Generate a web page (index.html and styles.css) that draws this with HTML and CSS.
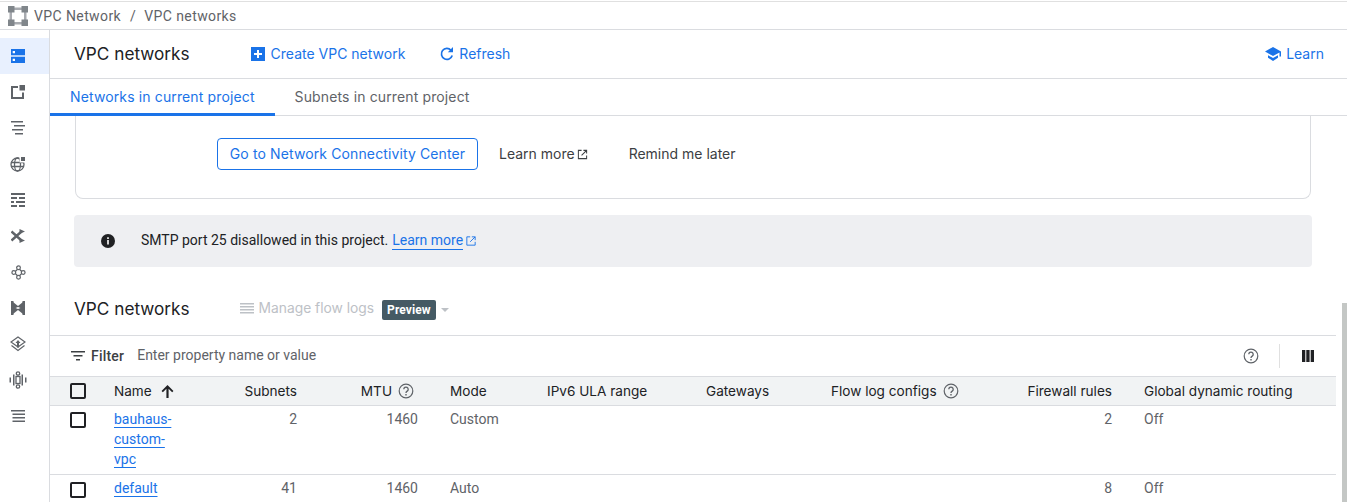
FILE: index.html
```html
<!DOCTYPE html>
<html lang="en">
<head>
<meta charset="utf-8">
<title>VPC networks</title>
<link rel="stylesheet" href="styles.css">
</head>
<body>
<header class="crumbs">
  <svg class="logo" viewBox="0 0 20 20" width="20" height="20"><path fill="#a8abb0" d="M6 1.500h8v2.500H6zM6 16h8v2.500H6zM1.500 6H4v8H1.500zM16 6h2.500v8H16z"/><path fill="#80868b" d="M0 0h6.500v6.500H0zM13.500 0H20v6.500h-6.500zM0 13.500h6.500V20H0zM13.500 13.500H20V20h-6.500z"/></svg>
  <span>VPC Network</span><span class="sep">/</span><span>VPC networks</span>
</header>
<div class="shell">
  <nav class="rail">
    <a class="rail-item active"><svg viewBox="0 0 14 14" width="14" height="14"><path fill="#1a73e8" d="M0 0h14v6.300H0zM0 7.700h14V14H0z"/><path fill="#fff" d="M1.700 2h2.300v2.300H1.700zM1.700 9.700h2.300V12H1.700z"/></svg></a>
    <a class="rail-item"><svg viewBox="0 0 14 14" width="14" height="14"><path fill="#5f6368" d="M0 1h7v2H2v9h9V7.500h2V14H0zM8.500 0H14v5.500H8.500z"/></svg></a>
    <a class="rail-item"><svg viewBox="0 0 14 14" width="14" height="14"><path fill="#5f6368" d="M0 0h12v1.500H0zM3 4h11v1.500H3zM1 8h11v1.500H1zM4 12h8v1.500H4z"/></svg></a>
    <a class="rail-item"><svg viewBox="0 0 16 16" width="16" height="16"><g fill="none" stroke="#5f6368" stroke-width="1.300"><circle cx="7.500" cy="8.500" r="6.500"/><ellipse cx="7.500" cy="8.500" rx="3" ry="6.500"/><path d="M1 6.500h13M1 10.500h13"/></g><path fill="#fff" d="M9.500 0H16v6.500H9.500z"/><path fill="#5f6368" d="M11 1h4v4h-4z"/></svg></a>
    <a class="rail-item"><svg viewBox="0 0 14 14" width="14" height="14"><path fill="#5f6368" d="M0 0h14v2H0zM0 4h6v2H0zM8 4h6v2H8zM0 8h3v2H0zM5 8h9v2H5zM0 12h6v2H0zM8 12h6v2H8z"/></svg></a>
    <a class="rail-item"><svg viewBox="0 0 14 14" width="14" height="14"><g fill="none" stroke="#5f6368" stroke-width="2.400"><path d="M.5 2.500l10 9M.5 11.500l10-9"/></g><path fill="#5f6368" d="M8.500 0L14 2.500 8.500 5zM8.500 9L14 11.500 8.500 14z"/></svg></a>
    <a class="rail-item"><svg viewBox="0 0 16 16" width="15" height="15"><g fill="none" stroke="#5f6368" stroke-width="1.300"><path d="M8 3.500L12.500 8 8 12.500 3.500 8z"/><g fill="#fff"><circle cx="8" cy="3" r="2"/><circle cx="8" cy="13" r="2"/><circle cx="3" cy="8" r="2"/><circle cx="13" cy="8" r="2"/></g></g></svg></a>
    <a class="rail-item"><svg viewBox="0 0 14 14" width="14" height="14"><path fill="#5f6368" d="M0 0h2.500v14H0zM11.500 0H14v14h-2.500z"/><path fill="#5f6368" fill-rule="evenodd" d="M2 1l5 4L12 1v12L7 9l-5 4zM7 6L4.500 7 7 8l2.500-1z"/></svg></a>
    <a class="rail-item"><svg viewBox="0 0 16 16" width="16" height="16"><g fill="none" stroke="#5f6368" stroke-width="1.200"><path d="M8 1l7 5-7 5-7-5z"/><path d="M1.500 9.500L8 14.500l6.500-5"/></g><path fill="#5f6368" d="M8 4l2.500 3H9v4.500H7V7H5.500z"/></svg></a>
    <a class="rail-item"><svg viewBox="0 0 18 18" width="18" height="18"><g fill="none" stroke="#5f6368" stroke-width="1.300"><rect x="7" y="5.500" width="4" height="7"/><circle cx="9" cy="2.500" r="1.700"/><circle cx="9" cy="15.500" r="1.700"/></g><path fill="#5f6368" d="M4 3.500h1.500v11H4zM12.500 3.500H14v11h-1.500zM0.500 6.500H2v5H0.500zM16 6.500h1.500v5H16z"/></svg></a>
    <a class="rail-item"><svg viewBox="0 0 14 14" width="14" height="14"><path fill="#5f6368" d="M0 1h14v1.500H0zM1.500 4.500H14V6H1.500zM1.500 8H14v1.500H1.500zM1.500 11.500H14V13H1.500z"/></svg></a>
  </nav>
  <main class="main">
    <div class="page-head">
      <h1 class="title">VPC networks</h1>
      <a class="action action-create"><svg viewBox="0 0 14 14" width="14" height="14"><path fill="#1a73e8" d="M0 0h14v14H0z"/><path fill="#fff" d="M6 3h2v3h3v2H8v3H6V8H3V6h3z"/></svg><span class="shift">Create VPC network</span></a>
      <a class="action action-refresh"><svg viewBox="0 0 16 16" width="16" height="16"><path fill="none" stroke="#1a73e8" stroke-width="1.700" d="M13.200 9.500A5.500 5.500 0 1 1 12 4.200"/><path fill="#1a73e8" d="M14 1v5.200H8.800z"/></svg><span class="shift">Refresh</span></a>
      <a class="action action-learn"><svg viewBox="0 0 16 14" width="16" height="14"><path fill="#1a73e8" d="M8 0l8 4.500v5h-1.500V5.400L8 9 0 4.500zM3 8.200l5 2.800 5-2.800v2.600L8 14l-5-3.200z"/></svg><span class="shift">Learn</span></a>
    </div>
    <div class="tabs">
      <a class="tab tab-active">Networks in current project</a>
      <a class="tab">Subnets in current project</a>
    </div>
    <div class="content">
      <section class="promo">
        <a class="btn-outline">Go to Network Connectivity Center</a>
        <a class="promo-link link-more"><span class="shift">Learn more</span><svg class="ext" viewBox="0 0 12 12" width="11" height="11"><path fill="none" stroke="#3c4043" stroke-width="1.100" d="M5 1.500H1.500v9h9V7M7 1.500h3.500V5M10.500 1.500L5 7"/></svg></a>
        <a class="promo-link link-remind"><span class="shift">Remind me later</span></a>
      </section>
      <section class="notice">
        <svg class="notice-icon" viewBox="0 0 14 14" width="14" height="14"><circle cx="7" cy="7" r="7" fill="#202124"/><path fill="#fff" d="M6.200 6h1.600v4.500H6.200zM6.200 3.300h1.600v1.600H6.200z"/></svg>
        <span class="shift">SMTP port 25 disallowed in this project.</span>
        <a class="notice-link">Learn more</a><svg class="ext-blue" viewBox="0 0 12 12" width="10" height="10"><path fill="none" stroke="#1a73e8" stroke-width="1.100" d="M5 1H1v10h10V7M7 1h4v4M11 1L5 7"/></svg>
      </section>
      <div class="section-head">
        <h2 class="title">VPC networks</h2>
        <span class="manage"><svg viewBox="0 0 14 11" width="14" height="11"><path fill="#bdc1c6" d="M0 0h14v1.500H0zM0 3h14v1.500H0zM0 6h14v1.500H0zM0 9h14v1.500H0z"/></svg><span>Manage flow logs</span></span>
        <span class="badge">Preview</span>
        <span class="caret"></span>
      </div>
    </div>
    <div class="filter">
      <svg viewBox="0 0 14 10" width="14" height="10"><path fill="#3c4043" d="M0 0h14v1.500H0zM2.500 4h9v1.500h-9zM5 8h4v1.500H5z"/></svg>
      <span class="filter-label">Filter</span>
      <span class="filter-input">Enter property name or value</span>
      <svg class="help-large" viewBox="0 0 16 16" width="16" height="16"><use href="#help"/></svg>
      <span class="divider"></span>
      <svg viewBox="0 0 12 12" width="12" height="12"><path fill="#202124" d="M0 0h3.300v12H0zM4.300 0h3.300v12H4.300zM8.700 0H12v12H8.700z"/></svg>
    </div>
    <table class="grid">
      <colgroup>
        <col class="c-check"><col class="c-name"><col class="c-subnets"><col class="c-mtu"><col class="c-mode"><col class="c-ipv6"><col class="c-gw"><col class="c-flow"><col class="c-fw"><col class="c-global">
      </colgroup>
      <thead>
        <tr>
          <th class="check"><span class="box"></span></th>
          <th>Name<svg class="sort" viewBox="0 0 12 12" width="13" height="13"><path fill="#202124" d="M5 12V3.500L1.700 6.800.5 5.500 6 0l5.500 5.500-1.200 1.300L7 3.500V12z"/></svg></th>
          <th class="num">Subnets</th>
          <th class="num mtu-head">MTU<svg class="help" viewBox="0 0 16 16" width="16" height="16"><use href="#help"/></svg></th>
          <th>Mode</th>
          <th>IPv6 ULA range</th>
          <th>Gateways</th>
          <th>Flow log configs<svg class="help" viewBox="0 0 16 16" width="16" height="16"><use href="#help"/></svg></th>
          <th class="num">Firewall rules</th>
          <th>Global dynamic routing</th>
        </tr>
      </thead>
      <tbody>
        <tr>
          <td class="check"><span class="box"></span></td>
          <td><div class="name-cell"><a>bauhaus-custom-vpc</a></div></td>
          <td class="num">2</td>
          <td class="num">1460</td>
          <td>Custom</td>
          <td></td><td></td><td></td>
          <td class="num">2</td>
          <td>Off</td>
        </tr>
        <tr>
          <td class="check"><span class="box"></span></td>
          <td><div class="name-cell"><a>default</a></div></td>
          <td class="num">41</td>
          <td class="num">1460</td>
          <td>Auto</td>
          <td></td><td></td><td></td>
          <td class="num">8</td>
          <td>Off</td>
        </tr>
      </tbody>
    </table>
  </main>
</div>
<div class="scroll-thumb"></div>
<svg class="defs" width="0" height="0"><defs><g id="help"><circle cx="8" cy="8" r="6.800" fill="none" stroke="#5f6368" stroke-width="1.200"/><path fill="none" stroke="#5f6368" stroke-width="1.300" d="M5.800 6.300a2.200 2.200 0 1 1 3.400 1.800c-.8.500-1.200.9-1.200 1.900"/><path fill="#5f6368" d="M7.300 11h1.400v1.400H7.300z"/></g></defs></svg>
</body>
</html>
```
FILE: styles.css
```css
* { box-sizing: border-box; }
html, body { margin: 0; height: 502px; overflow: hidden; background: #fff; }
body { font-family: Roboto, "Liberation Sans", sans-serif; font-size: 14px; color: #3c4043; position: relative; }
a { text-decoration: none; }
.shift { margin-bottom: 2px; }

.crumbs { height: 29px; border-top: 1px solid #e0e0e0; margin-top: 1px; border-bottom: 1px solid #dadce0; display: flex; align-items: center; padding-left: 8px; color: #5f6368; font-size: 14px; letter-spacing: .4px; }
.crumbs .logo { margin-right: 6px; }
.crumbs .sep { margin: 0 8px 0 9px; }

.shell { display: flex; height: 472px; }
.rail { width: 50px; flex: none; border-right: 1px solid #dadce0; padding-top: 8px; }
.rail-item { height: 36px; display: flex; align-items: center; justify-content: center; padding-right: 13px; }
.rail-item.active { background: #e8f0fe; }

.main { flex: 1; min-width: 0; }

.page-head { height: 49px; border-bottom: 1px solid #dadce0; display: flex; align-items: center; padding-left: 24px; }
.title { margin: 0; font: 400 17.200px/24px Inter, Roboto, sans-serif; color: #202124; letter-spacing: 0; }
.action { display: inline-flex; align-items: center; gap: 6px; color: #1a73e8; font-family: Inter, Roboto, sans-serif; font-size: 14px; }
.action-create { margin-left: 61px; }
.action-refresh { margin-left: 34px; gap: 4px; }
.action-learn { margin-left: auto; margin-right: 23px; gap: 5px; }

.tabs { height: 37px; border-bottom: 1px solid #dadce0; display: flex; }
.tab { padding: 0 20px; display: flex; align-items: center; color: #5f6368; font-family: Inter, Roboto, sans-serif; font-size: 14px; letter-spacing: .13px; height: 37px; border-bottom: 3px solid transparent; }
.tab-active { color: #1a73e8; border-bottom-color: #1a73e8; }

.content { padding: 0 35px 0 24px; }
.promo { height: 83px; margin-left: 1px; margin-right: 1px; border: 1px solid #dadce0; border-top: 0; border-radius: 0 0 8px 8px; display: flex; align-items: flex-start; padding: 22px 0 0 141px; }
.btn-outline { height: 32px; width: 261px; padding-bottom: 2px; border: 1px solid #1a73e8; border-radius: 4px; color: #1a73e8; font-family: Inter, Roboto, sans-serif; font-size: 14px; letter-spacing: .12px; display: flex; align-items: center; justify-content: center; }
.promo-link { height: 32px; display: inline-flex; align-items: center; color: #3c4043; font-family: Inter, Roboto, sans-serif; font-size: 14px; }
.link-more { margin-left: 21px; }
.link-more .ext { margin-left: 2px; }
.link-remind { margin-left: 41px; }

.notice { margin-top: 16px; height: 52px; background: #eeeff2; border-radius: 4px; display: flex; align-items: center; padding-left: 27px; color: #202124; }
.notice-icon { margin-right: 26px; }
.notice-link { color: #1a73e8; margin: 1px 0 0 4px; border-bottom: 1px solid #1a73e8; line-height: 14px; padding-bottom: 2px; }
.ext-blue { margin-left: 3px; }

.section-head { height: 68px; display: flex; align-items: center; }
.section-head .title { margin-top: 16px; }
.manage { display: inline-flex; align-items: center; gap: 5px; margin: 14px 0 0 50px; color: #bdc1c6; font-family: Inter, Roboto, sans-serif; font-size: 13.800px; }
.badge { margin: 17px 0 0 8px; background: #455a64; color: #fff; font-size: 12px; font-weight: 700; height: 20px; line-height: 20px; padding: 0 5px; border-radius: 2px; letter-spacing: .1px; }
.caret { margin: 17px 0 0 5px; border: 4px solid transparent; border-top: 4px solid #bdc1c6; border-bottom: 0; width: 0; height: 0; }

.filter { width: 1286px; height: 42px; border-top: 1px solid #dadce0; border-bottom: 1px solid #dadce0; display: flex; align-items: center; padding: 0 22px 1px 21px; }
.filter-label { margin-left: 6px; color: #3c4043; font-weight: 500; letter-spacing: .2px; }
.filter-input { margin: 0 0 2px 13px; color: #5f6368; }
.help-large { margin-left: auto; }
.divider { width: 1px; height: 24px; background: #e0e0e0; margin: 0 22px 0 20px; }

.grid { width: 1286px; border-collapse: collapse; table-layout: fixed; }
.c-check { width: 48px; } .c-name { width: 130px; } .c-subnets { width: 85px; } .c-mtu { width: 121px; }
.c-mode { width: 97px; } .c-ipv6 { width: 159px; } .c-gw { width: 125px; } .c-flow { width: 195px; } .c-fw { width: 118px; } .c-global { width: 208px; }
.grid th { height: 28px; background: #f1f3f4; border-bottom: 1px solid #dadce0; font-weight: 400; color: #202124; text-align: left; padding: 0 16px; white-space: nowrap; font-family: Inter, Roboto, sans-serif; font-size: 13.600px; }
.grid td { padding: 3px 16px 5px; line-height: 20px; border-bottom: 1px solid #dadce0; color: #5f6368; vertical-align: top; }
.grid .num { text-align: right; }
.grid .check { padding: 1px 0 0 20px; }
.grid td.check { padding-top: 6px; }
.grid tr + tr td.check { padding-top: 7px; }
.grid th svg { vertical-align: -3px; }
.grid .mtu-head { padding-right: 20px; }
.box { display: block; width: 16px; height: 16px; border: 2px solid #202124; border-radius: 2px; }
.grid th .sort { margin-left: 9px; vertical-align: -2px; }
.help { margin-left: 6px; }
.name-cell { width: 62px; }
.name-cell a { color: #1a73e8; text-decoration: underline; text-underline-offset: 3px; text-decoration-thickness: 1px; }

.scroll-thumb { position: absolute; right: 0; top: 303px; width: 5px; height: 199px; background: #c4c7c5; }
.defs { position: absolute; }
```
